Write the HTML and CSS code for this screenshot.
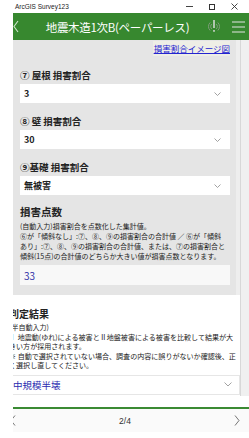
FILE: index.html
```html
<!DOCTYPE html>
<html lang="ja">
<head>
<meta charset="utf-8">
<title>ArcGIS Survey123</title>
<link rel="stylesheet" href="styles.css">
</head>
<body>
<div class="titlebar">
  <span class="appname">ArcGIS Survey123</span>
  <div class="winctl">
    <span class="ctl-min"></span>
    <span class="ctl-max"></span>
    <svg class="ctl-close" width="7" height="7" viewBox="0 0 7 7"><path d="M0.5 0.5L6.5 6.5M6.5 0.5L0.5 6.5" stroke="#333" stroke-width="0.9" fill="none"/></svg>
  </div>
</div>
<div class="frame">
  <div class="gutter"></div>
  <div class="app">
    <header class="topbar">
      <svg class="back" width="6" height="13" viewBox="0 0 6 13"><path d="M5 1L1 6.5L5 12" stroke="#cfe6cb" stroke-width="1.1" fill="none"/></svg>
      <h1 class="title">地震木造1次B(ペーパーレス)</h1>
      <svg class="gps" width="12" height="15" viewBox="0 0 12 15">
        <path d="M2.2 3.5A5.5 5.5 0 0 0 2.2 11.5" stroke="#7f9c7b" stroke-width="1" fill="none"/>
        <path d="M3.8 5A3.3 3.3 0 0 0 3.8 10" stroke="#7f9c7b" stroke-width="1" fill="none"/>
        <path d="M9.8 3.5A5.5 5.5 0 0 1 9.8 11.5" stroke="#7f9c7b" stroke-width="1" fill="none"/>
        <path d="M8.2 5A3.3 3.3 0 0 1 8.2 10" stroke="#7f9c7b" stroke-width="1" fill="none"/>
        <rect x="5.2" y="1" width="1.6" height="8" fill="#cfd6ce"/>
        <rect x="5.2" y="11" width="1.6" height="1.8" fill="#cfd6ce"/>
      </svg>
      <svg class="menu" width="13" height="12" viewBox="0 0 13 12"><path d="M0 1H13M0 6H13M0 11H13" stroke="#e4e4e4" stroke-width="1.1"/></svg>
    </header>
    <div class="body">
      <div class="scroller">
        <section class="card">
          <div class="linkrow"><a class="imglink" href="#">損害割合イメージ図</a></div>
          <div class="field">
            <div class="label">⑦ 屋根 損害割合</div>
            <div class="select"><span>3</span><svg class="chev" width="7" height="4" viewBox="0 0 7 4"><path d="M0.5 0.5L3.5 3.5L6.5 0.5" stroke="#8a8a8a" stroke-width="0.8" fill="none"/></svg></div>
          </div>
          <div class="field">
            <div class="label">⑧ 壁 損害割合</div>
            <div class="select"><span>30</span><svg class="chev" width="7" height="4" viewBox="0 0 7 4"><path d="M0.5 0.5L3.5 3.5L6.5 0.5" stroke="#8a8a8a" stroke-width="0.8" fill="none"/></svg></div>
          </div>
          <div class="field">
            <div class="label">⑨基礎 損害割合</div>
            <div class="select"><span>無被害</span><svg class="chev" width="7" height="4" viewBox="0 0 7 4"><path d="M0.5 0.5L3.5 3.5L6.5 0.5" stroke="#8a8a8a" stroke-width="0.8" fill="none"/></svg></div>
          </div>
          <div class="score">
            <div class="score-title">損害点数</div>
            <p class="hint">(自動入力)損害割合を点数化した集計値。<br>⑥が「傾斜なし」:⑦、⑧、⑨の損害割合の合計値 ／ ⑥が「傾斜<br>あり」:⑦、⑧、⑨の損害割合の合計値、または、⑦の損害割合と<br>傾斜(15点)の合計値のどちらか大きい値が損害点数となります。</p>
            <div class="output">33</div>
          </div>
        </section>
        <section class="result">
          <div class="result-title">判定結果</div>
          <p class="hint2">(半自動入力)<br>Ⅰ 地震動(ゆれ)による被害とⅡ地盤被害による被害を比較して結果が大<br>きい方が採用されます。<br>※ 自動で選択されていない場合、調査の内容に誤りがないか確認後、正<br>く選択し直してください。</p>
          <div class="select2"><span>中規模半壊</span><svg class="chev" width="8" height="5" viewBox="0 0 8 5"><path d="M0.5 0.5L4 4L7.5 0.5" stroke="#8a8a8a" stroke-width="0.8" fill="none"/></svg></div>
        </section>
      </div>
      <div class="scrollbar"></div>
    </div>
    <footer class="pager">
      <svg class="prev" width="6" height="11" viewBox="0 0 6 11"><path d="M5 0.5L1 5.5L5 10.5" stroke="#666" stroke-width="0.9" fill="none"/></svg>
      <span class="page">2/4</span>
      <svg class="next" width="6" height="11" viewBox="0 0 6 11"><path d="M1 0.5L5 5.5L1 10.5" stroke="#666" stroke-width="0.9" fill="none"/></svg>
    </footer>
  </div>
</div>
</body>
</html>
```

FILE: styles.css
```css
* { box-sizing: border-box; }
html, body { margin: 0; padding: 0; }
body {
  width: 249px;
  height: 438px;
  overflow: hidden;
  background: #ffffff;
  font-family: "Noto Sans CJK JP", "Noto Sans", sans-serif;
  color: #222;
}
.titlebar {
  height: 13px;
  display: flex;
  align-items: center;
  padding-left: 15px;
  background: #fff;
}
.appname {
  font-family: "Liberation Sans", sans-serif;
  font-size: 6.5px;
  color: #222;
  flex: 1;
}
.winctl {
  display: flex;
  align-items: center;
  padding-right: 11px;
}
.ctl-min { width: 7px; height: 1px; background: #444; margin-right: 16px; }
.ctl-max { width: 6px; height: 6px; border: 0.9px solid #333; margin-right: 16px; }
.ctl-close { display: block; }

.frame { display: flex; height: 425px; }
.gutter { width: 13px; background: #fff; }
.app { flex: 1; display: flex; flex-direction: column; overflow: hidden; }

.topbar {
  height: 27px;
  background: #37882f;
  display: flex;
  align-items: center;
}
.back { display: block; }
.title {
  margin: 0;
  flex: 1;
  text-align: center;
  font-size: 11.5px;
  font-weight: 400;
  color: #fff;
  padding-left: 8px;
  letter-spacing: -0.3px;
}
.gps { display: block; margin-right: 12px; }
.menu { display: block; margin-right: 4px; }

.body { flex: 1; display: flex; min-height: 0; }
.scroller { flex: 1; background: #fff; overflow: hidden; }
.scrollbar { width: 9px; background: #f0f0f0; border-left: 1px solid #d8d8d8; }

.card {
  box-sizing: content-box;
  width: 210px;
  background: #e5e5e5;
  padding: 0 6px 10px 7px;
  border-right: 4px solid #eeeeee;
}
.linkrow {
  height: 17px;
  display: flex;
  justify-content: flex-end;
  align-items: center;
}
.imglink {
  font-size: 8.5px;
  color: #2424d0;
  text-decoration: underline;
  background: #eeeee6;
  padding: 1px 0 1px 1px;
  line-height: 13px;
}
.field { margin-top: 12px; }
.label {
  font-size: 9.5px;
  font-weight: 700;
  line-height: 13px;
  margin-bottom: 2px;
  color: #222;
}
.select {
  height: 19px;
  background: #fff;
  display: flex;
  align-items: center;
  justify-content: space-between;
  padding: 0 9px 0 4px;
  font-size: 9px;
  font-weight: 700;
  color: #222;
}
.chev { display: block; }
.score { margin-top: 10px; }
.score-title {
  font-size: 10.5px;
  font-weight: 700;
  line-height: 14px;
}
.hint {
  margin: 2px 0 0;
  font-size: 7px;
  line-height: 10px;
  white-space: nowrap;
  color: #222;
}
.output {
  margin-top: 4px;
  height: 20px;
  background: #f8f8f8;
  display: flex;
  align-items: center;
  padding-left: 4px;
  font-size: 10px;
  color: #3434a8;
}

.result {
  margin-left: -4px;
  margin-top: 12px;
  width: 231px;
}
.result-title {
  font-size: 10px;
  font-weight: 700;
  line-height: 14px;
}
.hint2 {
  margin: 2px 0 0;
  font-size: 7.05px;
  line-height: 9.5px;
  white-space: nowrap;
  color: #222;
}
.select2 {
  margin-top: 4px;
  height: 20px;
  background: #fff;
  border: 1px solid #e6e6e6;
  display: flex;
  align-items: center;
  justify-content: space-between;
  padding: 0 7px 0 3px;
  font-size: 9.5px;
  color: #2a2ab0;
}

.pager {
  margin-top: 11px;
  height: 25px;
  border-top: 2px solid #3a8a33;
  background: #fafafa;
  display: flex;
  align-items: center;
  justify-content: space-between;
  padding: 0 9px 0 0;
  margin-bottom: 6px;
}
.prev { margin-left: -3px; display: block; }
.page { font-family: "Liberation Sans", sans-serif; font-size: 8.5px; color: #333; }
.next { display: block; }
```
